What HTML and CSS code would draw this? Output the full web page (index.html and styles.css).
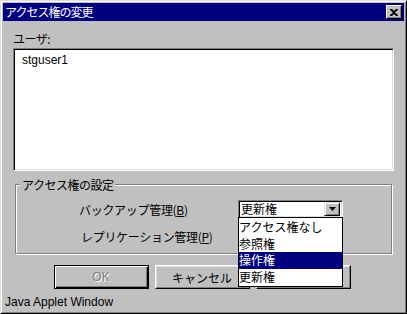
FILE: index.html
```html
<!DOCTYPE html>
<html lang="ja">
<head>
  <meta charset="UTF-8" />
  <title>アクセス権の変更</title>
  <link rel="stylesheet" href="styles.css">
</head>
<body>
  <div class="window">
    <div class="titlebar">
      <span class="title">アクセス権の変更</span>
      <button class="close-btn">
        <svg width="8" height="7" viewBox="0 0 8 7"><path d="M0 0h2l2 2 2-2h2v1L5 3.5 8 6v1H6L4 5 2 7H0V6l3-2.5L0 1z" fill="#000"/></svg>
      </button>
    </div>

    <div class="body">
      <div class="label">ユーザ:</div>
      <div class="userlist">
        <div class="user">stguser1</div>
      </div>

      <div class="group">
        <span class="legend">アクセス権の設定</span>
        <div class="row">
          <span class="row-label">バックアップ管理(<u>B</u>)</span>
          <div class="combo">
            <span class="combo-value">更新権</span>
            <span class="combo-arrow">
              <svg width="7" height="4" viewBox="0 0 7 4"><path d="M0 0h7L3.5 4z" fill="#000"/></svg>
            </span>
            <ul class="droplist">
              <li>アクセス権なし</li>
              <li>参照権</li>
              <li class="selected">操作権</li>
              <li>更新権</li>
            </ul>
          </div>
        </div>
        <div class="row second">
          <span class="row-label">レプリケーション管理(<u>P</u>)</span>
        </div>
      </div>

      <div class="buttons">
        <button class="btn default disabled">OK</button>
        <button class="btn">キャンセル</button>
        <button class="btn">ヘルプ</button>
      </div>
    </div>

    <div class="status">Java Applet Window</div>
  </div>
</body>
</html>
```

FILE: styles.css
```css
body {
  margin: 0;
  background: #c0c0c0;
  font-family: "Noto Sans CJK JP", "Liberation Sans", sans-serif;
  font-size: 12px;
  color: #000;
}

.window {
  width: 407px;
  height: 314px;
  box-sizing: border-box;
  background: #c0c0c0;
  border: 1px solid;
  border-color: #dfdfdf #000 #000 #dfdfdf;
  box-shadow: inset 1px 1px #fff, inset -1px -1px #808080;
  padding: 2px;
  display: flex;
  flex-direction: column;
}

.titlebar {
  height: 18px;
  background: #000080;
  color: #fff;
  display: flex;
  align-items: center;
  justify-content: space-between;
  padding: 0 2px 0 2px;
}

.title {
  line-height: 18px;
  letter-spacing: -1px;
}

.close-btn {
  width: 16px;
  height: 14px;
  padding: 0;
  margin: 0;
  background: #c0c0c0;
  border: 1px solid;
  border-color: #fff #000 #000 #fff;
  box-shadow: inset -1px -1px #808080;
  display: flex;
  align-items: center;
  justify-content: center;
}

.body {
  padding: 10px 10px 0 10px;
  flex: 1;
}

.label {
  line-height: 16px;
  height: 16px;
  margin-bottom: 1px;
  letter-spacing: -0.5px;
}

.userlist {
  height: 123px;
  box-sizing: border-box;
  background: #fff;
  border: 1px solid;
  border-color: #808080 #fff #fff #808080;
  box-shadow: inset 1px 1px #000, inset -1px -1px #dfdfdf;
  padding: 4px 8px;
}

.user {
  font-family: "Liberation Sans", sans-serif;
  font-size: 12px;
  line-height: 14px;
}

.group {
  position: relative;
  margin: 13px 2px 0 2px;
  height: 70px;
  box-sizing: border-box;
  border: 1px solid #808080;
  box-shadow: inset 1px 1px #fff, 1px 1px #fff;
  padding: 15px 0 0 63px;
}

.legend {
  position: absolute;
  top: -8px;
  left: 4px;
  padding: 0 2px 0 2px;
  background: #c0c0c0;
  line-height: 15px;
  letter-spacing: -0.5px;
}

.row {
  display: flex;
  align-items: center;
  height: 18px;
}

.row.second {
  margin-top: 9px;
  padding-left: 2px;
}

.row-label {
  width: 159px;
  letter-spacing: -0.3px;
}

.row-label u {
  text-decoration-thickness: 1px;
  text-underline-offset: 1px;
}

.combo {
  position: relative;
  width: 105px;
  height: 18px;
  box-sizing: border-box;
  background: #fff;
  border: 1px solid;
  border-color: #808080 #fff #fff #808080;
  box-shadow: inset 1px 1px #000, inset -1px -1px #dfdfdf;
  display: flex;
  align-items: center;
  justify-content: space-between;
  padding: 0 2px 0 2px;
}

.combo-value {
  line-height: 16px;
}

.combo-arrow {
  width: 16px;
  height: 14px;
  box-sizing: border-box;
  background: #c0c0c0;
  border: 1px solid;
  border-color: #dfdfdf #000 #000 #dfdfdf;
  box-shadow: inset 1px 1px #fff, inset -1px -1px #808080;
  display: flex;
  align-items: center;
  justify-content: center;
}

.droplist {
  position: absolute;
  top: 16px;
  left: -1px;
  width: 105px;
  box-sizing: border-box;
  margin: 0;
  padding: 1px 0 1px 0;
  list-style: none;
  background: #fff;
  border: 1px solid #000;
  z-index: 10;
}

.droplist li {
  height: 16.5px;
  line-height: 16px;
  padding-left: 0;
}

.droplist li.selected {
  background: #000080;
  color: #fff;
}

.buttons {
  display: flex;
  justify-content: center;
  gap: 6px;
  margin-top: 11px;
  padding-right: 3px;
}

.btn {
  width: 95px;
  height: 24px;
  margin: 0;
  padding: 0;
  font-family: inherit;
  font-size: 12px;
  background: #c0c0c0;
  border: 1px solid;
  border-color: #fff #000 #000 #fff;
  box-shadow: inset -1px -1px #808080, inset 1px 1px #dfdfdf;
}

.btn.default {
  border: 1px solid #000;
  box-shadow: inset 1px 1px #fff, inset -1px -1px #000, inset -2px -2px #808080;
}

.btn.disabled {
  font-family: "Liberation Sans", sans-serif;
  color: #808080;
  text-shadow: 1px 1px #fff;
}

.status {
  font-family: "Liberation Sans", sans-serif;
  font-size: 12px;
  line-height: 14px;
  padding: 0 0 2px 2px;
}
```
